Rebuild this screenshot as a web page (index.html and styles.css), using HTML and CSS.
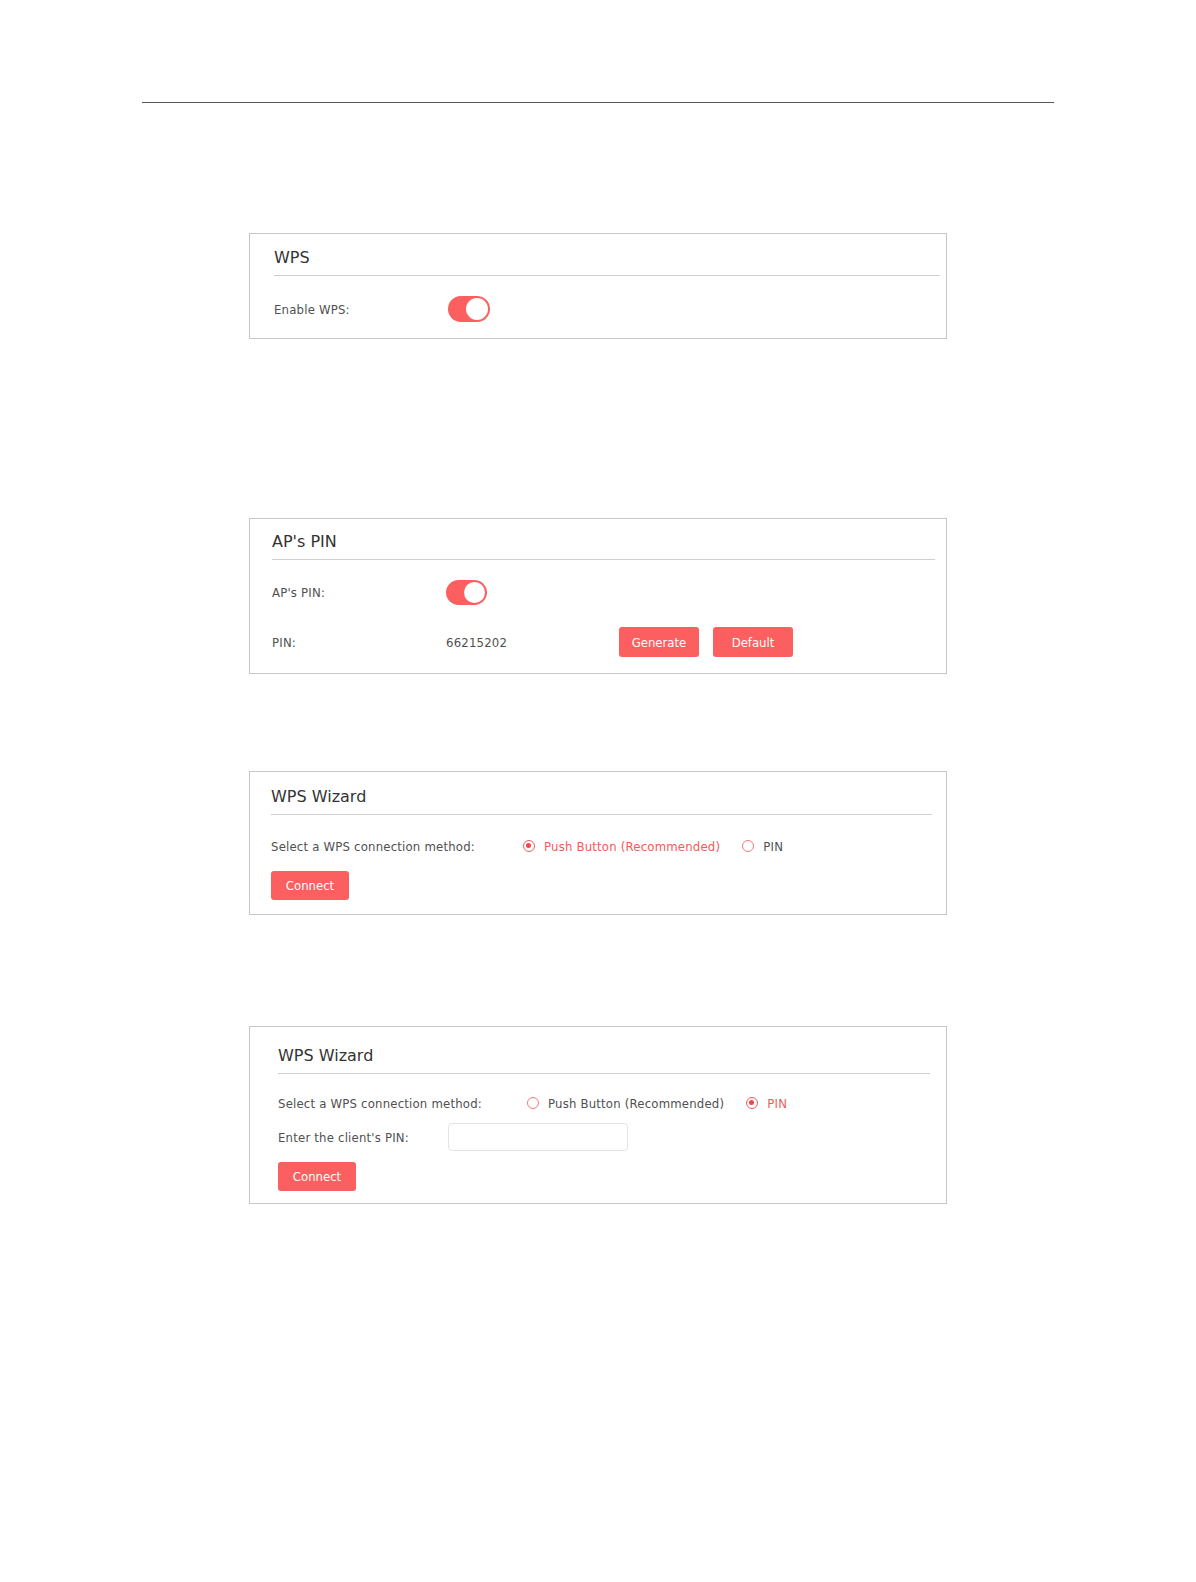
FILE: index.html
```html
<!DOCTYPE html>
<html lang="en">
<head>
  <meta charset="UTF-8">
  <meta name="viewport" content="width=device-width, initial-scale=1.0">
  <title>WPS</title>
  <link rel="stylesheet" href="styles.css">
</head>
<body>
  <div class="page-rule"></div>

  <!-- WPS switch -->
  <div class="panel panel-wps">
    <h3 class="panel-title">WPS</h3>
    <div class="row row-first">
      <span class="label label-short">Enable WPS:</span>
      <span class="toggle on"></span>
    </div>
  </div>

  <!-- AP's PIN -->
  <div class="panel panel-pin">
    <h3 class="panel-title">AP's PIN</h3>
    <div class="row row-first">
      <span class="label label-short">AP's PIN:</span>
      <span class="toggle on"></span>
    </div>
    <div class="row row-pin">
      <span class="label label-short">PIN:</span>
      <span class="value">66215202</span>
      <button class="btn">Generate</button>
      <button class="btn">Default</button>
    </div>
  </div>

  <!-- WPS Wizard, push button -->
  <div class="panel panel-wizard">
    <h3 class="panel-title">WPS Wizard</h3>
    <div class="row row-first">
      <span class="label label-wide">Select a WPS connection method:</span>
      <span class="option checked"><span class="radio"></span>Push Button (Recommended)</span>
      <span class="option"><span class="radio"></span>PIN</span>
    </div>
    <button class="btn btn-connect">Connect</button>
  </div>

  <!-- WPS Wizard, PIN -->
  <div class="panel panel-wizard-pin">
    <h3 class="panel-title">WPS Wizard</h3>
    <div class="row row-first">
      <span class="label label-wide">Select a WPS connection method:</span>
      <span class="option"><span class="radio"></span>Push Button (Recommended)</span>
      <span class="option checked"><span class="radio"></span>PIN</span>
    </div>
    <div class="row row-input">
      <span class="label label-input">Enter the client's PIN:</span>
      <input type="text" class="pin-input">
    </div>
    <button class="btn btn-connect">Connect</button>
  </div>
</body>
</html>
```

FILE: styles.css
```css
body {
  margin: 0;
  background: #fff;
  font-family: "DejaVu Sans", Verdana, sans-serif;
  font-stretch: condensed;
  font-size: 13px;
  color: #505050;
}

.page-rule {
  margin: 102px 0 0 142px;
  width: 912px;
  height: 1px;
  background: #555;
}

.panel {
  box-sizing: border-box;
  width: 698px;
  margin-left: 249px;
  border: 1px solid #c6c6c6;
}

.panel-title {
  margin: 0;
  padding-bottom: 7px;
  border-bottom: 1px solid #cfcfcf;
  font-size: 16px;
  font-weight: normal;
  font-stretch: normal;
  line-height: 20px;
  color: #333;
}

/* each screenshot was cut a little differently */
.panel-wps {
  margin-top: 130px;
  padding: 14px 6px 16px 24px;
}

.panel-wps .panel-title {
  padding-bottom: 7px;
}

.panel-pin {
  margin-top: 179px;
  padding: 13px 11px 16px 22px;
}

.panel-wizard {
  margin-top: 97px;
  padding: 15px 14px 14px 21px;
}

.panel-wizard-pin {
  margin-top: 111px;
  padding: 19px 16px 12px 28px;
}

.row {
  display: flex;
  align-items: center;
  min-height: 20px;
  letter-spacing: 0.2px;
}

.row-first {
  margin-top: 20px;
}

.panel-wizard .row-first {
  margin-top: 21px;
}

.panel-wizard-pin .row-first {
  margin-top: 19px;
}

.row-pin {
  margin-top: 22px;
}

.row-input {
  margin-top: 10px;
}

.label {
  flex: none;
}

.label-short {
  width: 174px;
}

.label-wide {
  width: 252px;
}

.panel-wizard-pin .label-wide {
  width: 249px;
}

.label-input {
  width: 170px;
}

.value {
  width: 173px;
}

.toggle {
  position: relative;
  display: inline-block;
  width: 41px;
  height: 25px;
  border-radius: 13px;
  background: #fb5f5f;
}

.panel-wps .toggle {
  width: 42px;
  height: 26px;
}

.toggle::after {
  content: "";
  position: absolute;
  top: 2px;
  right: 2px;
  width: 21px;
  height: 21px;
  border-radius: 50%;
  background: #fff;
}

.panel-wps .toggle::after {
  width: 22px;
  height: 22px;
}

.btn {
  width: 80px;
  height: 30px;
  margin-right: 14px;
  padding: 0;
  border: none;
  border-radius: 3px;
  background: #fb5f5f;
  color: #fff;
  font-family: inherit;
  font-stretch: condensed;
  font-size: 13px;
  cursor: pointer;
}

.btn:hover {
  background: #f04f4f;
}

.btn-connect {
  display: block;
  width: 78px;
  height: 29px;
  margin-top: 15px;
}

.panel-wizard-pin .btn-connect {
  margin-top: 11px;
}

.option {
  display: inline-flex;
  align-items: center;
  margin-right: 22px;
  color: #505050;
}

.option.checked {
  color: #f05a5a;
}

.radio {
  position: relative;
  box-sizing: border-box;
  width: 12px;
  height: 12px;
  margin-right: 9px;
  border: 1.5px solid #f27a7a;
  border-radius: 50%;
}

.option.checked .radio {
  border-color: #f05a5a;
}

.option.checked .radio::after {
  content: "";
  position: absolute;
  top: 2px;
  left: 2px;
  width: 5px;
  height: 5px;
  border-radius: 50%;
  background: #f04848;
}

.pin-input {
  box-sizing: border-box;
  width: 180px;
  height: 28px;
  border: 1px solid #e4e4e4;
  border-radius: 4px;
  outline: none;
}
```
